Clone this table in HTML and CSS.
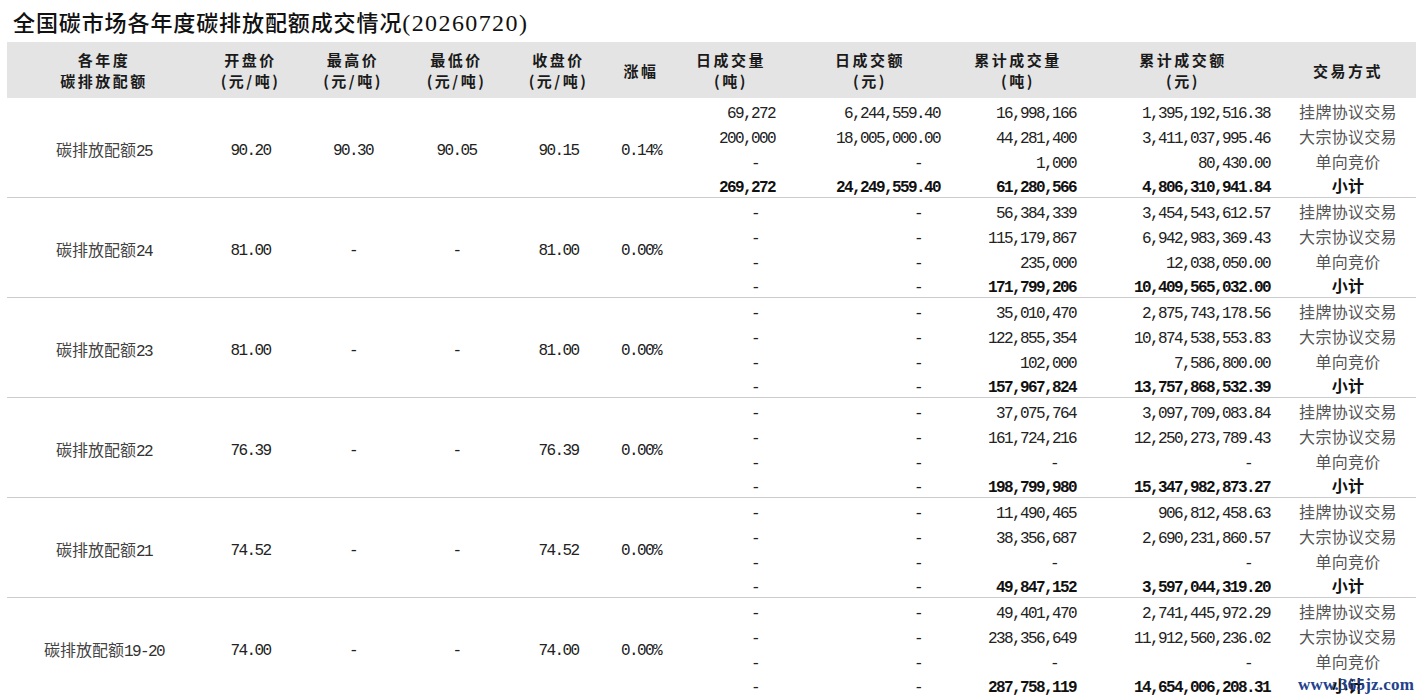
FILE: index.html
```html
<!DOCTYPE html>
<html lang="zh-CN">
<head>
<meta charset="utf-8">
<title>全国碳市场各年度碳排放配额成交情况</title>
<link rel="stylesheet" href="styles.css">
</head>
<body>
<div class="page">
  <h1 class="title">全国碳市场各年度碳排放配额成交情况<span class="title-date">(20260720)</span></h1>
  <table class="grid">
    <colgroup>
      <col class="w-name"><col class="w-p1"><col class="w-p2"><col class="w-p3"><col class="w-p4"><col class="w-pct">
      <col class="w-dv"><col class="w-da"><col class="w-cv"><col class="w-ca"><col class="w-mode">
    </colgroup>
    <thead>
      <tr>
        <th>各年度<br>碳排放配额</th>
        <th>开盘价<br>(元/吨)</th>
        <th>最高价<br>(元/吨)</th>
        <th>最低价<br>(元/吨)</th>
        <th>收盘价<br>(元/吨)</th>
        <th>涨幅</th>
        <th>日成交量<br>(吨)</th>
        <th>日成交额<br>(元)</th>
        <th>累计成交量<br>(吨)</th>
        <th>累计成交额<br>(元)</th>
        <th>交易方式</th>
      </tr>
    </thead>
    <tbody>
      <tr>
        <td rowspan="4" class="name end">碳排放配额<span class="mono">25</span></td>
        <td rowspan="4" class="mid end">90.20</td>
        <td rowspan="4" class="mid end">90.30</td>
        <td rowspan="4" class="mid end">90.05</td>
        <td rowspan="4" class="mid end">90.15</td>
        <td rowspan="4" class="mid end">0.14%</td>
        <td class="num c7">69,272</td><td class="num">6,244,559.40</td><td class="num">16,998,166</td><td class="num">1,395,192,516.38</td><td class="mode">挂牌协议交易</td>
      </tr>
      <tr><td class="num c7">200,000</td><td class="num">18,005,000.00</td><td class="num">44,281,400</td><td class="num">3,411,037,995.46</td><td class="mode">大宗协议交易</td></tr>
      <tr><td class="num c7 dash">-</td><td class="num dash">-</td><td class="num">1,000</td><td class="num">80,430.00</td><td class="mode">单向竞价</td></tr>
      <tr class="total"><td class="num c7 end">269,272</td><td class="num end">24,249,559.40</td><td class="num end">61,280,566</td><td class="num end">4,806,310,941.84</td><td class="mode end">小计</td></tr>

      <tr>
        <td rowspan="4" class="name end">碳排放配额<span class="mono">24</span></td>
        <td rowspan="4" class="mid end">81.00</td>
        <td rowspan="4" class="mid end">-</td>
        <td rowspan="4" class="mid end">-</td>
        <td rowspan="4" class="mid end">81.00</td>
        <td rowspan="4" class="mid end">0.00%</td>
        <td class="num c7 dash">-</td><td class="num dash">-</td><td class="num">56,384,339</td><td class="num">3,454,543,612.57</td><td class="mode">挂牌协议交易</td>
      </tr>
      <tr><td class="num c7 dash">-</td><td class="num dash">-</td><td class="num">115,179,867</td><td class="num">6,942,983,369.43</td><td class="mode">大宗协议交易</td></tr>
      <tr><td class="num c7 dash">-</td><td class="num dash">-</td><td class="num">235,000</td><td class="num">12,038,050.00</td><td class="mode">单向竞价</td></tr>
      <tr class="total"><td class="num c7 dash end">-</td><td class="num dash end">-</td><td class="num end">171,799,206</td><td class="num end">10,409,565,032.00</td><td class="mode end">小计</td></tr>

      <tr>
        <td rowspan="4" class="name end">碳排放配额<span class="mono">23</span></td>
        <td rowspan="4" class="mid end">81.00</td>
        <td rowspan="4" class="mid end">-</td>
        <td rowspan="4" class="mid end">-</td>
        <td rowspan="4" class="mid end">81.00</td>
        <td rowspan="4" class="mid end">0.00%</td>
        <td class="num c7 dash">-</td><td class="num dash">-</td><td class="num">35,010,470</td><td class="num">2,875,743,178.56</td><td class="mode">挂牌协议交易</td>
      </tr>
      <tr><td class="num c7 dash">-</td><td class="num dash">-</td><td class="num">122,855,354</td><td class="num">10,874,538,553.83</td><td class="mode">大宗协议交易</td></tr>
      <tr><td class="num c7 dash">-</td><td class="num dash">-</td><td class="num">102,000</td><td class="num">7,586,800.00</td><td class="mode">单向竞价</td></tr>
      <tr class="total"><td class="num c7 dash end">-</td><td class="num dash end">-</td><td class="num end">157,967,824</td><td class="num end">13,757,868,532.39</td><td class="mode end">小计</td></tr>

      <tr>
        <td rowspan="4" class="name end">碳排放配额<span class="mono">22</span></td>
        <td rowspan="4" class="mid end">76.39</td>
        <td rowspan="4" class="mid end">-</td>
        <td rowspan="4" class="mid end">-</td>
        <td rowspan="4" class="mid end">76.39</td>
        <td rowspan="4" class="mid end">0.00%</td>
        <td class="num c7 dash">-</td><td class="num dash">-</td><td class="num">37,075,764</td><td class="num">3,097,709,083.84</td><td class="mode">挂牌协议交易</td>
      </tr>
      <tr><td class="num c7 dash">-</td><td class="num dash">-</td><td class="num">161,724,216</td><td class="num">12,250,273,789.43</td><td class="mode">大宗协议交易</td></tr>
      <tr><td class="num c7 dash">-</td><td class="num dash">-</td><td class="num dash">-</td><td class="num dash">-</td><td class="mode">单向竞价</td></tr>
      <tr class="total"><td class="num c7 dash end">-</td><td class="num dash end">-</td><td class="num end">198,799,980</td><td class="num end">15,347,982,873.27</td><td class="mode end">小计</td></tr>

      <tr>
        <td rowspan="4" class="name end">碳排放配额<span class="mono">21</span></td>
        <td rowspan="4" class="mid end">74.52</td>
        <td rowspan="4" class="mid end">-</td>
        <td rowspan="4" class="mid end">-</td>
        <td rowspan="4" class="mid end">74.52</td>
        <td rowspan="4" class="mid end">0.00%</td>
        <td class="num c7 dash">-</td><td class="num dash">-</td><td class="num">11,490,465</td><td class="num">906,812,458.63</td><td class="mode">挂牌协议交易</td>
      </tr>
      <tr><td class="num c7 dash">-</td><td class="num dash">-</td><td class="num">38,356,687</td><td class="num">2,690,231,860.57</td><td class="mode">大宗协议交易</td></tr>
      <tr><td class="num c7 dash">-</td><td class="num dash">-</td><td class="num dash">-</td><td class="num dash">-</td><td class="mode">单向竞价</td></tr>
      <tr class="total"><td class="num c7 dash end">-</td><td class="num dash end">-</td><td class="num end">49,847,152</td><td class="num end">3,597,044,319.20</td><td class="mode end">小计</td></tr>

      <tr>
        <td rowspan="4" class="name end">碳排放配额<span class="mono">19-20</span></td>
        <td rowspan="4" class="mid end">74.00</td>
        <td rowspan="4" class="mid end">-</td>
        <td rowspan="4" class="mid end">-</td>
        <td rowspan="4" class="mid end">74.00</td>
        <td rowspan="4" class="mid end">0.00%</td>
        <td class="num c7 dash">-</td><td class="num dash">-</td><td class="num">49,401,470</td><td class="num">2,741,445,972.29</td><td class="mode">挂牌协议交易</td>
      </tr>
      <tr><td class="num c7 dash">-</td><td class="num dash">-</td><td class="num">238,356,649</td><td class="num">11,912,560,236.02</td><td class="mode">大宗协议交易</td></tr>
      <tr><td class="num c7 dash">-</td><td class="num dash">-</td><td class="num dash">-</td><td class="num dash">-</td><td class="mode">单向竞价</td></tr>
      <tr class="total"><td class="num c7 dash end">-</td><td class="num dash end">-</td><td class="num end">287,758,119</td><td class="num end">14,654,006,208.31</td><td class="mode end">小计</td></tr>
    </tbody>
  </table>
  <div class="watermark">www.365jz.com</div>
</div>
</body>
</html>
```

FILE: styles.css
```css
html, body {
  margin: 0;
  padding: 0;
  background: #ffffff;
}

body {
  font-family: "Noto Sans CJK SC", "Noto Sans", sans-serif;
  color: #333333;
  overflow: hidden;
}

.page {
  position: relative;
  padding: 0 6px 0 7px;
}

.title {
  margin: 0;
  height: 42px;
  line-height: 42px;
  padding-left: 6px;
  font-size: 22px;
  font-weight: 500;
  letter-spacing: 0.9px;
  color: #111111;
  white-space: nowrap;
}

.title-date {
  font-family: "Liberation Serif", serif;
  font-size: 24px;
  letter-spacing: 1.4px;
}

.grid {
  border-collapse: separate;
  border-spacing: 0;
  table-layout: fixed;
  width: 1409px;
}

.w-name { width: 194px; }
.w-p1 { width: 99px; }
.w-p2 { width: 106px; }
.w-p3 { width: 101px; }
.w-p4 { width: 103px; }
.w-pct { width: 62px; }
.w-dv { width: 118px; }
.w-da { width: 160px; }
.w-cv { width: 136px; }
.w-ca { width: 194px; }
.w-mode { width: 136px; }

.grid th {
  background: #e4e4e4;
  height: 56px;
  padding: 0;
  font-size: 15px;
  line-height: 21px;
  font-weight: 700;
  letter-spacing: 2.5px;
  color: #1a1a1a;
  text-align: center;
  vertical-align: middle;
}

.grid td {
  padding: 0;
  font-size: 16px;
  line-height: 25px;
  white-space: nowrap;
  vertical-align: middle;
}

.grid td.end {
  border-bottom: 1px solid #cccccc;
  line-height: 24px;
}

.grid tbody tr:nth-last-child(-n+4) td.end {
  border-bottom-color: transparent;
}

.mono, .num, .mid {
  font-family: "Liberation Mono", monospace;
  letter-spacing: -1.6px;
  color: #222222;
}

.name {
  text-align: center;
  color: #444444;
  letter-spacing: 0;
  padding-top: 6px !important;
}

.name .mono {
  color: #333333;
}

.mid {
  text-align: center;
  padding-top: 7px !important;
}

.num {
  text-align: right;
  padding-right: 10px !important;
  padding-top: 7px !important;
}

.grid td.num {
  line-height: 18px;
}

.grid td.num.end {
  line-height: 17px;
}

.num.c7 {
  padding-right: 15px !important;
}

.num.dash {
  padding-right: 28px !important;
}

.num.c7.dash {
  padding-right: 31px !important;
}

.mode {
  text-align: center;
  color: #555555;
  letter-spacing: 0.3px;
}

.grid td.mode {
  padding-top: 1px;
  line-height: 24px;
}

.grid td.mode.end {
  line-height: 23px;
}

.total .num {
  font-weight: 700;
  color: #111111;
}

.total .num.dash {
  font-weight: 400;
  color: #222222;
}

.total .mode {
  font-weight: 700;
  color: #111111;
}

.watermark {
  position: absolute;
  right: 8px;
  top: 675px;
  font-family: "Liberation Serif", serif;
  font-weight: 700;
  font-size: 17px;
  line-height: 20px;
  color: #23418c;
  letter-spacing: 0.2px;
}
```
